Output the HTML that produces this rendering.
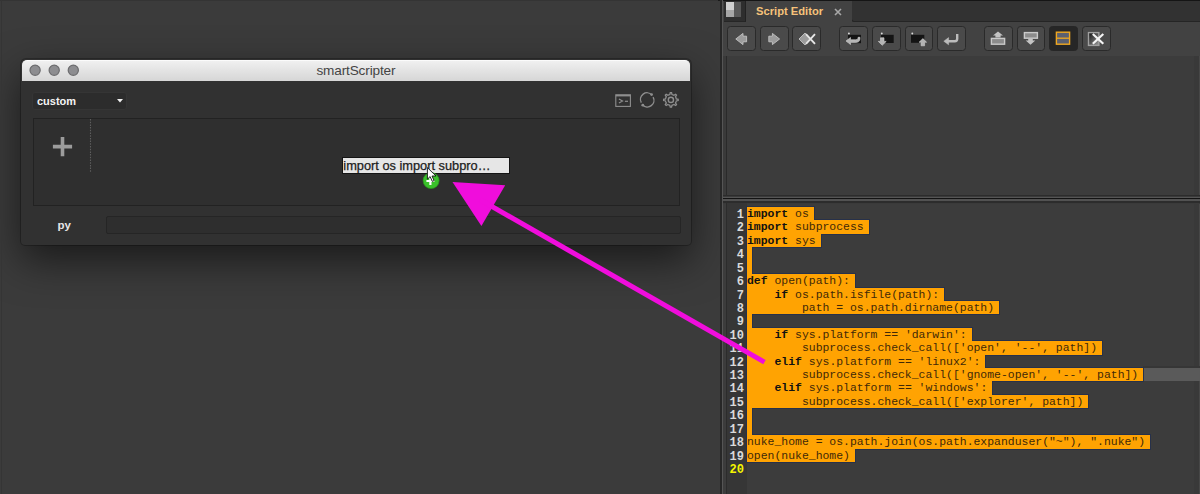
<!DOCTYPE html>
<html><head><meta charset="utf-8">
<style>
*{margin:0;padding:0;box-sizing:border-box}
html,body{width:1200px;height:494px;overflow:hidden;background:#3a3a3a;font-family:"Liberation Sans",sans-serif}
.a{position:absolute}
#left{left:0;top:0;width:720px;height:494px;background:#3b3b3b;overflow:hidden}
#win{left:21px;top:59px;width:669.8px;height:186px;border-radius:5px 5px 4px 4px;background:#313131;box-shadow:0 15px 40px rgba(0,0,0,0.57),0 0 0 1px rgba(0,0,0,0.25)}
#title{left:0.8px;top:1px;width:668.2px;height:21px;border-radius:5px 5px 0 0;background:linear-gradient(#f0f0f0,#e4e4e4 45%,#d6d6d6);border-top:1px solid #fbfbfb}
#title .t{left:0;top:2px;width:668.2px;text-align:center;font-size:13.6px;color:#444;letter-spacing:-0.15px}
.tl{width:11.5px;height:11.5px;border-radius:50%;background:#8d8d90;border:1.2px solid #6c6c6e;top:3.3px}
#dd{left:11px;top:32.8px;width:95px;height:18.4px;border-radius:3px;background:#2c2c2c;border:1px solid #353535}
#dd .t{left:4px;top:2px;font-size:11px;font-weight:bold;color:#f4f4f4}
#box{left:11.8px;top:59px;width:647px;height:88px;border:1px solid #222;background:#2f2f2f}
#inp{left:85px;top:157px;width:575px;height:18px;border:1px solid #252525;border-radius:2px;background:#2e2e2e}
#py{left:36.5px;top:160px;font-size:11.5px;font-weight:bold;color:#e6e6e6}
#right{left:720px;top:0;width:480px;height:494px;background:#3a3a3a}
.btn{top:26.3px;width:28.5px;height:24.5px;border-radius:3.5px;background:#4a4a4a;border:1.5px solid #2a2a2a}
.btn.on{background:#262626;border-color:#262626}
#code,#codeol{left:27px;top:207px}
#codeol span{background:#27314a;box-shadow:0 0 0 1px #27314a;color:transparent}
#codeol b{color:transparent}
.cl{position:absolute;left:0;height:13.42px;white-space:pre;font-family:"Liberation Mono",monospace;font-size:11.45px;line-height:13.42px;color:#3f2908}
.cl span{display:inline-block;background:#ffa302;padding-right:5px;height:13.42px}
.cl b{color:#111}
#nums{left:0;top:209px;width:24px;text-align:right;font-weight:bold;color:#dadada;font-size:12px}
.code{font-family:"Liberation Mono",monospace;font-size:11.45px;line-height:13.42px;white-space:pre}
</style></head><body>
<div id="left" class="a">
  <div id="win" class="a">
    <div id="title" class="a">
      <svg class="a" style="left:-1px;top:-1px" width="80" height="22"><g fill="#8d8d90" stroke="#6c6c6e" stroke-width="1.2"><circle cx="14.1" cy="10.2" r="5.1"/><circle cx="33.2" cy="10.2" r="5.1"/><circle cx="52.3" cy="10.2" r="5.1"/></g></svg>
      <div class="a t">smartScripter</div>
    </div>
    <div id="dd" class="a"><div class="a t">custom</div>
      <svg class="a" style="left:84px;top:6px" width="6" height="4"><path d="M0 0H6L3 3.5Z" fill="#f0f0f0"/></svg>
    </div>
    <div id="box" class="a"></div>
    <div id="inp" class="a"></div>
    <div id="py" class="a">py</div>
  </div>
<svg class="a" style="left:0;top:0" width="720" height="494">
 <g fill="none" stroke="#8e8e8e">
  <rect x="615.8" y="94.8" width="14.6" height="11.6" stroke-width="1.1"/>
  <path d="M615.8 95.6H630.4" stroke-width="1.6"/>
  <path d="M618.9 99.1L622.6 101.1L618.9 103.1" stroke-width="1.1"/>
  <path d="M624.9 101.3H628" stroke-width="1.2"/>
  <path d="M651.8 94.8A6.6 6.6 0 0 0 641.3 102.6M642.6 105A6.6 6.6 0 0 0 653.1 97.2" stroke-width="1.4"/>
  <path d="M669.83 94.51 L670.27 92.63 L671.53 92.63 L671.97 94.51 L673.00 94.82 L673.96 95.33 L675.60 94.31 L676.49 95.20 L675.47 96.84 L675.98 97.80 L676.29 98.83 L678.17 99.27 L678.17 100.53 L676.29 100.97 L675.98 102.00 L675.47 102.96 L676.49 104.60 L675.60 105.49 L673.96 104.47 L673.00 104.98 L671.97 105.29 L671.53 107.17 L670.27 107.17 L669.83 105.29 L668.80 104.98 L667.84 104.47 L666.20 105.49 L665.31 104.60 L666.33 102.96 L665.82 102.00 L665.51 100.97 L663.63 100.53 L663.63 99.27 L665.51 98.83 L665.82 97.80 L666.33 96.84 L665.31 95.20 L666.20 94.31 L667.84 95.33 L668.80 94.82Z" stroke-width="1.3"/>
  <circle cx="670.9" cy="99.9" r="2.6" stroke-width="1.4"/>
 </g>
 <g fill="#8e8e8e"><circle cx="651.6" cy="94.6" r="1.4"/><circle cx="642.8" cy="105.2" r="1.4"/></g>
 <path d="M52.9 146.6H72.1M62.5 137V156.2" stroke="#9c9c9c" stroke-width="3.6"/>
 <path d="M90.5 119V173" stroke="#5e5e5e" stroke-width="1.1" stroke-dasharray="1.5 1.2"/>
</svg>
<div class="a" style="left:341.5px;top:156.8px;width:168px;height:17px;background:#e6e6e6;border:1px solid #151515;overflow:hidden">
 <div class="a" style="left:0.8px;top:0.7px;font-size:12.8px;color:#1c1c1c;white-space:nowrap;-webkit-text-stroke:0.25px #1c1c1c">import os import subpro…</div>
</div>
<svg class="a" style="left:0;top:0" width="720" height="494">
 <circle cx="431.1" cy="180.6" r="8" fill="#3ac02a" stroke="#2a9a1c" stroke-width="0.7"/>
 <path d="M430.4 177V185M426.4 181H434.4" stroke="#fff" stroke-width="2.2"/>
 <path d="M427.4 167.6V179.2L430.1 176.6L432.3 181.4L434.1 180.6L432 176H436L427.4 167.6Z" fill="#fff" stroke="#111" stroke-width="0.9" stroke-linejoin="round"/>
</svg>
</div>
<div class="a" style="left:0;top:0;width:718px;height:1px;background:#343434"></div>
<div class="a" style="left:1px;top:0;width:1px;height:494px;background:#353535"></div>
<div id="right" class="a">
  <div class="a" style="left:-2px;top:0;width:5px;height:1px;background:#1a1a1a"></div>
  <div class="a" style="left:0;top:0;width:1.5px;height:494px;background:#272727"></div>
  <div class="a" style="left:1.5px;top:0;width:1.5px;height:494px;background:#555"></div>
  <div class="a" style="left:3px;top:0;width:477px;height:1px;background:#151515"></div>
  <!-- tab bar -->
  <div class="a" style="left:3px;top:1px;width:477px;height:55px;background:#424242"></div>
  <div class="a" style="left:131px;top:1px;width:349px;height:21px;background:#323232;border-left:1px solid #252525;border-bottom:1px solid #252525;border-bottom-left-radius:3px"></div>
  <div id="menuic" class="a" style="left:3.5px;top:1px;width:22px;height:21px;background:#2e2e2e;border-right:1px solid #222;border-bottom:1px solid #262626"></div>
  <div class="a" style="left:5.5px;top:1.5px;width:8px;height:8.5px;background:#d0d0d0"></div>
  <div class="a" style="left:5.5px;top:10px;width:8px;height:6.5px;background:#a6a6a6"></div>
  <div class="a" style="left:13.5px;top:1.5px;width:7.5px;height:15px;background:#585858"></div>
  <div class="a" style="left:26px;top:1px;width:106px;height:21px;background:#424242"></div>
  <div class="a" style="left:36px;top:5px;font-size:11.2px;font-weight:bold;color:#f6c27a;white-space:nowrap">Script Editor</div>
  <svg class="a" style="left:113.5px;top:7.5px" width="8" height="8"><path d="M1 1L7 7M7 1L1 7" stroke="#a8a8a8" stroke-width="1.6"/></svg>
  <!-- toolbar buttons -->
  <div class="a btn" style="left:7.3px"></div>
  <div class="a btn" style="left:40.0px"></div>
  <div class="a btn" style="left:72.3px"></div>
  <div class="a btn" style="left:119.3px"></div>
  <div class="a btn" style="left:152.0px"></div>
  <div class="a btn" style="left:184.8px"></div>
  <div class="a btn" style="left:217.3px"></div>
  <div class="a btn" style="left:264.0px"></div>
  <div class="a btn" style="left:296.6px"></div>
  <div class="a btn on" style="left:329.0px"></div>
  <div class="a btn" style="left:362.0px"></div>
<svg class="a" style="left:0;top:0" width="480" height="60" viewBox="720 0 480 60">
 <defs><linearGradient id="g11" x1="0" y1="0" x2="1" y2="1"><stop offset="0" stop-color="#111"/><stop offset="1" stop-color="#999"/></linearGradient></defs>
 <g fill="#9c9c9c" stroke="#c4c4c4" stroke-width="0.9" stroke-linejoin="round">
  <path d="M735.8 39L743 33.4V36.2H746.6V41.8H743V44.6Z"/>
  <path d="M779.6 39L772.4 33.4V36.2H768.8V41.8H772.4V44.6Z"/>
  <path d="M799 39L805 33L811 39L805 45Z"/>
 </g>
 <path d="M806 34.2L815 43.8M815 34.2L806 43.8" stroke="#e6e6e6" stroke-width="1.9"/>
 <g fill="#141414">
  <rect x="848" y="34.8" width="13" height="8.4"/>
  <rect x="881" y="34.8" width="12.7" height="8.2"/>
  <rect x="911" y="34.8" width="13.3" height="8"/>
 </g>
 <g fill="#dcdcdc"><circle cx="848.9" cy="33.5" r="0.95"/><circle cx="881.8" cy="33.5" r="0.95"/><circle cx="912.3" cy="33.5" r="0.95"/></g>
 <g fill="#b4b4b4" stroke="#d0d0d0" stroke-width="0.6" stroke-linejoin="round">
  <path d="M846 41L850.5 37.5V39.8H855.5Q858 39.8 858 38.2V37.3H860V38.6Q860 42.4 855.8 42.4H850.5V44.5Z"/>
  <path d="M880.5 37.8H884V41.4H886.2L882.25 45.3L878.3 41.4H880.5Z"/>
  <path d="M922.9 38.6L926.6 42.2H924.6V45.8H921.1V42.2H919.1Z"/>
 </g>
 <path d="M957.2 34V38.8Q957.2 41.2 954.8 41.2H947" fill="none" stroke="#bcbcbc" stroke-width="2.4"/>
 <path d="M943.8 41.2L948.6 37.6V44.8Z" fill="#bcbcbc" stroke="#bcbcbc" stroke-width="0.5" stroke-linejoin="round"/>
 <g fill="#8c8c8c" stroke="#cacaca" stroke-width="1.4">
  <rect x="991.4" y="38.4" width="13.2" height="5.8"/>
  <rect x="1024.4" y="32.6" width="13" height="5.6"/>
 </g>
 <g fill="#c4c4c4">
  <path d="M998 31.5L1003 35.6H1000.6V37.6H995.4V35.6H993Z"/>
  <path d="M1028.2 38.6H1032.8V40.6H1035.3L1030.5 44.8L1025.7 40.6H1028.2Z"/>
 </g>
 <rect x="1056.4" y="32.2" width="13.2" height="12" fill="#5b6070" stroke="#f0a820" stroke-width="1.4"/>
 <path d="M1056.4 38.2H1069.6" stroke="#f0a820" stroke-width="1.3"/>
 <rect x="1088.5" y="32.6" width="10.4" height="12.8" fill="url(#g11)" stroke="#a0a0a0" stroke-width="1.4"/>
 <path d="M1092.8 34L1103.3 43.8M1103.3 34L1092.8 43.8" stroke="#f4f4f4" stroke-width="2.2"/>
</svg>
  <!-- output pane -->
  <div class="a" style="left:6px;top:55.8px;width:474px;height:139px;background:#3c3c3c;border-left:1.5px solid #2a2a2a"></div>
  <div class="a" style="left:474px;top:55.8px;width:4.5px;height:139px;background:#393939"></div>
  <div class="a" style="left:478.8px;top:55.8px;width:1.2px;height:139px;background:#474747"></div>
  <!-- splitter -->
  <div class="a" style="left:3px;top:194.8px;width:477px;height:1.7px;background:#2c2c2c"></div>
  <div class="a" style="left:3px;top:196.5px;width:477px;height:1.2px;background:#555"></div>
  <div class="a" style="left:3px;top:197.7px;width:477px;height:1.7px;background:#131313"></div>
  <div class="a" style="left:3px;top:199.4px;width:477px;height:1.8px;background:#525252"></div>
  <div class="a" style="left:3px;top:201.2px;width:477px;height:2.3px;background:#2c2c2c"></div>
  <!-- input pane -->
  <div class="a" style="left:3px;top:203.5px;width:477px;height:291px;background:#3c3c3c"></div>
  <div class="a" style="left:6px;top:203.3px;width:21px;height:291px;background:#363636;border-left:1.5px solid #2c2c2c"></div>
  <div class="a" style="left:474px;top:203.5px;width:4.5px;height:291px;background:#393939"></div>
  <div class="a" style="left:478.8px;top:203.5px;width:1.2px;height:291px;background:#474747"></div>
  <div class="a" style="left:423px;top:366.3px;width:57px;height:1.5px;background:#363636"></div>
  <div class="a" style="left:423px;top:367.8px;width:57px;height:13.6px;background:#5a5a5a"></div>
  <div id="codeol" class="a">
<div class="cl" style="top:0.00px"><span><b>import</b> os</span></div>
<div class="cl" style="top:13.42px"><span><b>import</b> subprocess</span></div>
<div class="cl" style="top:26.84px"><span><b>import</b> sys</span></div>
<div class="cl" style="top:40.26px"><span></span></div>
<div class="cl" style="top:53.68px"><span></span></div>
<div class="cl" style="top:67.10px"><span><b>def</b> open(path):</span></div>
<div class="cl" style="top:80.52px"><span>    <b>if</b> os.path.isfile(path):</span></div>
<div class="cl" style="top:93.94px"><span>        path = os.path.dirname(path)</span></div>
<div class="cl" style="top:107.36px"><span></span></div>
<div class="cl" style="top:120.78px"><span>    <b>if</b> sys.platform == 'darwin':</span></div>
<div class="cl" style="top:134.20px"><span>        subprocess.check_call(['open', '--', path])</span></div>
<div class="cl" style="top:147.62px"><span>    <b>elif</b> sys.platform == 'linux2':</span></div>
<div class="cl" style="top:161.04px"><span>        subprocess.check_call(['gnome-open', '--', path])</span></div>
<div class="cl" style="top:174.46px"><span>    <b>elif</b> sys.platform == 'windows':</span></div>
<div class="cl" style="top:187.88px"><span>        subprocess.check_call(['explorer', path])</span></div>
<div class="cl" style="top:201.30px"><span></span></div>
<div class="cl" style="top:214.72px"><span></span></div>
<div class="cl" style="top:228.14px"><span>nuke_home = os.path.join(os.path.expanduser("~"), ".nuke")</span></div>
<div class="cl" style="top:241.56px"><span>open(nuke_home)</span></div>
</div>
<div id="code" class="a">
<div class="cl" style="top:0.00px"><span><b>import</b> os</span></div>
<div class="cl" style="top:13.42px"><span><b>import</b> subprocess</span></div>
<div class="cl" style="top:26.84px"><span><b>import</b> sys</span></div>
<div class="cl" style="top:40.26px"><span></span></div>
<div class="cl" style="top:53.68px"><span></span></div>
<div class="cl" style="top:67.10px"><span><b>def</b> open(path):</span></div>
<div class="cl" style="top:80.52px"><span>    <b>if</b> os.path.isfile(path):</span></div>
<div class="cl" style="top:93.94px"><span>        path = os.path.dirname(path)</span></div>
<div class="cl" style="top:107.36px"><span></span></div>
<div class="cl" style="top:120.78px"><span>    <b>if</b> sys.platform == 'darwin':</span></div>
<div class="cl" style="top:134.20px"><span>        subprocess.check_call(['open', '--', path])</span></div>
<div class="cl" style="top:147.62px"><span>    <b>elif</b> sys.platform == 'linux2':</span></div>
<div class="cl" style="top:161.04px"><span>        subprocess.check_call(['gnome-open', '--', path])</span></div>
<div class="cl" style="top:174.46px"><span>    <b>elif</b> sys.platform == 'windows':</span></div>
<div class="cl" style="top:187.88px"><span>        subprocess.check_call(['explorer', path])</span></div>
<div class="cl" style="top:201.30px"><span></span></div>
<div class="cl" style="top:214.72px"><span></span></div>
<div class="cl" style="top:228.14px"><span>nuke_home = os.path.join(os.path.expanduser("~"), ".nuke")</span></div>
<div class="cl" style="top:241.56px"><span>open(nuke_home)</span></div>
</div>
<div id="nums" class="a code">1
2
3
4
5
6
7
8
9
10
11
12
13
14
15
16
17
18
19
<span style="color:#f4f400">20</span></div>
</div>
<svg class="a" style="left:0;top:0" width="1200" height="494">
 <path d="M452.5 182L505.2 185.3L481.4 226Z" fill="#f00ddc"/>
 <path d="M480 199.7L764.5 362.2" stroke="#f00ddc" stroke-width="5"/>
</svg>
</body></html>
